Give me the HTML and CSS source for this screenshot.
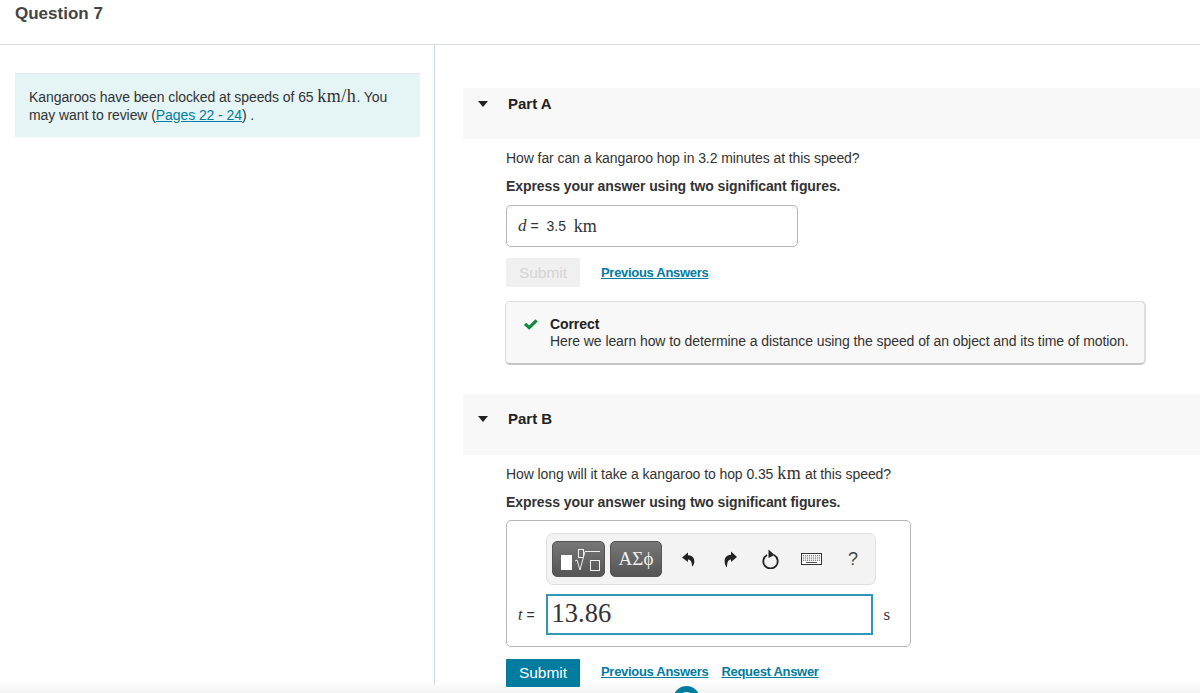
FILE: index.html
```html
<!DOCTYPE html>
<html lang="en">
<head>
    <meta charset="UTF-8">
    <meta name="viewport" content="width=device-width, initial-scale=1.0">
    <title>Question 7</title>
    <link rel="stylesheet" href="styles.css">
</head>
<body>
    <header class="page-header">
        <h1>Question 7</h1>
    </header>

    <div class="columns">
        <aside class="left-col">
            <div class="intro">
                Kangaroos have been clocked at speeds of 65 <span class="math math-unit">km/h</span>. You may want to review (<a href="#">Pages 22 - 24</a>) .
            </div>
        </aside>

        <main class="right-col">
            <section class="part">
                <div class="part-head">
                    <span class="caret"></span>
                    <h2>Part A</h2>
                </div>
                <div class="part-body">
                    <p class="question">How far can a kangaroo hop in 3.2 minutes at this speed?</p>
                    <p class="instruction">Express your answer using two significant figures.</p>
                    <div class="answer-done">
                        <span class="math var">d</span><span class="eq">=</span><span>3.5</span><span class="math done-unit">km</span>
                    </div>
                    <div class="actions">
                        <button class="submit submit-off">Submit</button>
                        <a href="#" class="action-link">Previous Answers</a>
                    </div>
                    <div class="feedback">
                        <svg class="check" width="16" height="13" viewBox="0 0 18 14">
                            <path d="M1 7.5 L3.6 4.9 L7 8.2 L14 1 L16.6 3.6 L7 13 Z" fill="#0f8a3c"/>
                        </svg>
                        <div>
                            <div class="feedback-title">Correct</div>
                            <div>Here we learn how to determine a distance using the speed of an object and its time of motion.</div>
                        </div>
                    </div>
                </div>
            </section>

            <section class="part part-b">
                <div class="part-head">
                    <span class="caret"></span>
                    <h2>Part B</h2>
                </div>
                <div class="part-body">
                    <p class="question">How long will it take a kangaroo to hop 0.35 <span class="math math-unit">km</span> at this speed?</p>
                    <p class="instruction">Express your answer using two significant figures.</p>
                    <div class="answer-box">
                        <div class="toolbar">
                            <button class="tool-btn tool-templates">
                                <svg width="51" height="34" viewBox="0 0 51 34">
                                    <rect x="8" y="13" width="11" height="15" fill="#fff"/>
                                    <rect x="25.500" y="7.500" width="5" height="8" fill="none" stroke="#eee"/>
                                    <path d="M22 19 L24 18 L27 28 L32 9.500 H47" fill="none" stroke="#eee"/>
                                    <rect x="37.500" y="18.500" width="9" height="10" fill="none" stroke="#eee"/>
                                </svg>
                            </button>
                            <button class="tool-btn tool-symbols">ΑΣϕ</button>
                            <svg class="tool-undo" width="14" height="15" viewBox="0 0 14 15">
                                <path d="M6 0.500 L0 5.500 L6 10 V7.500 C8.500 7.500 10 9.500 10 14.500 C13 13 14.500 3.500 6 3.200 Z" fill="#222"/>
                            </svg>
                            <svg class="tool-redo" width="14" height="17" viewBox="0 0 14 17">
                                <path d="M8 0.500 L14 6 L8 11 V8.500 C5.500 8.500 4 10.500 4 16.500 C1 14 -0.500 4 8 3.700 Z" fill="#222"/>
                            </svg>
                            <svg class="tool-reset" width="17" height="20" viewBox="0 0 17 20">
                                <path d="M5 6 A7.200 7.200 0 1 0 12 6" fill="none" stroke="#222" stroke-width="1.800"/>
                                <path d="M6.500 0.500 L12.500 6 L6.500 9 Z" fill="#222"/>
                            </svg>
                            <svg class="tool-keys" width="21" height="12" viewBox="0 0 21 12">
                                <rect x="0.500" y="0.500" width="20" height="11" fill="#fff" stroke="#333"/>
                                <path d="M2 2.800 H19 M2 5 H19 M2 7.200 H19" stroke="#555" stroke-dasharray="1.200 0.800"/>
                                <path d="M5 9.500 H16" stroke="#555"/>
                            </svg>
                            <span class="tool-help">?</span>
                        </div>
                        <div class="entry-row">
                            <span class="math var var-t">t</span><span class="eq">=</span>
                            <div class="entry">13.86</div>
                            <span class="math entry-unit">s</span>
                        </div>
                    </div>
                    <div class="actions actions-b">
                        <button class="submit">Submit</button>
                        <a href="#" class="action-link">Previous Answers</a>
                        <a href="#" class="action-link link-request">Request Answer</a>
                    </div>
                </div>
            </section>
        </main>
    </div>

    <div class="bottom-fade"></div>
    <div class="help-bubble"></div>
</body>
</html>
```

FILE: styles.css
```css
html, body {
    height: 100%;
}

body {
    font-family: "Liberation Sans", Arial, sans-serif;
    font-size: 14px;
    letter-spacing: -0.08px;
    color: #333;
    background: #fff;
    margin: 0;
    overflow: hidden;
}

p {
    margin: 0;
}

a {
    color: #007c9e;
}

.math {
    font-family: "Liberation Serif", "Times New Roman", serif;
    letter-spacing: 0;
}

.page-header {
    height: 44px;
    border-bottom: 1px solid #dcdfe2;
}

.page-header h1 {
    margin: 0;
    padding: 4px 0 0 15px;
    font-size: 17px;
    line-height: 20px;
    letter-spacing: 0;
    color: #444;
}

.columns {
    display: flex;
    height: 640px;
}

.left-col {
    box-sizing: border-box;
    width: 435px;
    flex-shrink: 0;
    padding: 28px 14px 0 15px;
    border-right: 1px solid #c5d6e4;
}

.intro {
    box-sizing: border-box;
    height: 64px;
    padding: 13px 14px 0;
    line-height: 18px;
    background: #e5f5f6;
    border-top: 1px solid #dfe7e7;
}

.math-unit {
    font-size: 18px;
    line-height: 1;
    letter-spacing: 0.5px;
}

.right-col {
    flex: 1;
    min-width: 0;
    padding: 43px 0 0 28px;
}

.part-head {
    display: flex;
    align-items: flex-start;
    height: 51px;
    background: #f8f8f8;
}

.part-head h2 {
    margin: 0;
    padding-top: 7px;
    font-size: 15px;
    line-height: 17px;
    letter-spacing: 0;
    color: #222;
}

.caret {
    margin: 13px 20px 0 15px;
    border-style: solid;
    border-width: 6px 5px 0;
    border-color: #222 transparent transparent;
}

.part-body {
    padding: 10px 0 0 43px;
}

.question {
    line-height: 18px;
}

.instruction {
    margin-top: 10px;
    font-weight: bold;
    line-height: 18px;
}

.answer-done {
    box-sizing: border-box;
    display: flex;
    align-items: center;
    width: 292px;
    height: 42px;
    margin-top: 10px;
    padding-left: 11px;
    background: #fff;
    border: 1px solid #b5b5b5;
    border-radius: 5px;
}

.var {
    font-size: 17px;
    font-style: italic;
}

.eq {
    margin: 0 8px 0 4px;
    font-size: 14px;
}

.done-unit {
    margin-left: 8px;
    font-size: 18px;
}

.actions {
    display: flex;
    align-items: center;
    margin-top: 11px;
}

.submit {
    width: 74px;
    height: 29px;
    padding: 0;
    font-family: inherit;
    font-size: 15.500px;
    color: #fff;
    background: #007c9e;
    border: none;
    border-radius: 1px;
}

.submit-off {
    color: #d4d4d4;
    background: #f0f0f0;
}

.action-link {
    margin-left: 21px;
    font-size: 13px;
    font-weight: bold;
    letter-spacing: -0.3px;
}

.link-request {
    margin-left: 13px;
}

.feedback {
    box-sizing: border-box;
    display: flex;
    width: 640px;
    height: 64px;
    margin: 14px 0 0 -1px;
    padding: 14px 0 0 17px;
    line-height: 17px;
    background: #f8f8f8;
    border: 1px solid #ddd;
    border-bottom: 2px solid #c4c4c4;
    border-radius: 5px;
    box-shadow: 1px 0 0 #ddd;
}

.check {
    flex-shrink: 0;
    margin: 2px 11px 0 0;
}

.feedback-title {
    font-weight: bold;
    color: #222;
}

.part-b {
    margin-top: 29px;
}

.part-b .part-head {
    height: 61px;
}

.part-b .part-head h2 {
    padding-top: 16px;
}

.part-b .caret {
    margin-top: 22px;
}

.part-b .part-body {
    padding-top: 9px;
}

.answer-box {
    box-sizing: border-box;
    width: 405px;
    height: 127px;
    margin-top: 9px;
    padding: 12px 0 0 39px;
    border: 1px solid #b5b5b5;
    border-radius: 5px;
}

.toolbar {
    box-sizing: border-box;
    display: flex;
    align-items: center;
    gap: 5px;
    width: 330px;
    height: 52px;
    padding-left: 5px;
    background: #f3f3f3;
    border: 1px solid #e0e0e0;
    border-radius: 7px;
}

.tool-btn {
    height: 36px;
    padding: 0;
    color: #eee;
    background: linear-gradient(to bottom, #777, #555);
    border: 1px solid #555;
    border-radius: 5px;
}

.tool-btn svg {
    display: block;
}

.tool-templates {
    width: 53px;
}

.tool-symbols {
    width: 52px;
    font-family: "Liberation Serif", serif;
    font-size: 19px;
}

.toolbar svg {
    flex-shrink: 0;
}

.tool-undo {
    margin-left: 15px;
}

.tool-redo {
    margin-left: 22px;
}

.tool-reset {
    margin-left: 20px;
}

.tool-keys {
    margin-left: 17px;
}

.tool-help {
    margin-left: 21px;
    font-size: 18px;
    color: #444;
}

.entry-row {
    display: flex;
    align-items: center;
    margin: 9px 0 0 -28px;
}

.var-t {
    font-size: 16px;
}

.entry-row .eq {
    margin: 0 11px 0 4px;
}

.entry {
    box-sizing: border-box;
    flex-shrink: 0;
    width: 327px;
    height: 41px;
    padding-left: 4px;
    font-family: "Liberation Serif", serif;
    font-size: 26.500px;
    letter-spacing: 0;
    line-height: 35px;
    border: 2px solid #3197b6;
}

.entry-unit {
    margin-left: 11px;
    font-size: 17px;
}

.actions-b {
    margin-top: 12px;
}

.actions-b .submit {
    position: relative;
    z-index: 1;
    height: 28px;
}

.actions-b .action-link {
    margin-bottom: 3px;
}

.bottom-fade {
    position: fixed;
    left: 0;
    right: 0;
    bottom: 0;
    height: 12px;
    background: linear-gradient(to bottom, rgba(243, 243, 243, 0), #f3f3f3);
}

.help-bubble {
    position: fixed;
    left: 673px;
    top: 686px;
    width: 27px;
    height: 27px;
    box-sizing: border-box;
    border: 6px solid #007c9e;
    border-radius: 50%;
}
```
